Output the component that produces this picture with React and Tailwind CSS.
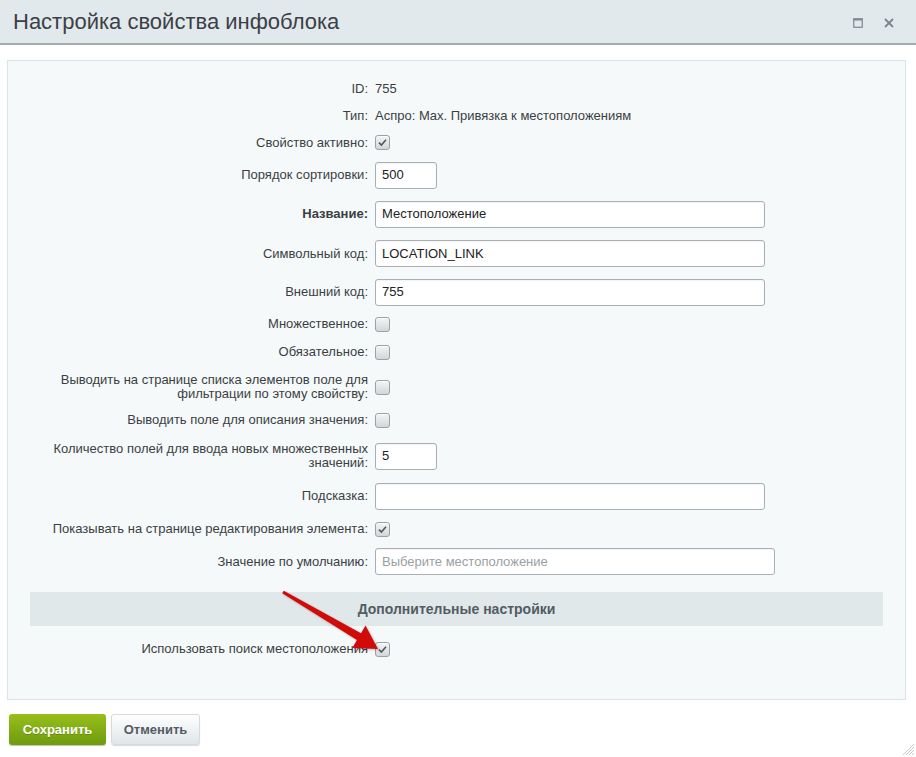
import React from 'react'

const font = { fontFamily: '"Liberation Sans", Arial, sans-serif' }

function Checkbox({ checked }) {
  return (
    <span className="inline-flex h-[15px] w-[15px] items-center justify-center rounded-[3px] border border-[#9aa1a7] bg-gradient-to-b from-[#f3f4f5] to-[#d3d7da] shadow-[inset_0_1px_0_#fff]">
      {checked && (
        <svg width="11" height="11" viewBox="0 0 11 11">
          <path d="M2 5.6 L4.4 8 L9 2.8" fill="none" stroke="#50575d" strokeWidth="1.6" />
        </svg>
      )}
    </span>
  )
}

function TextInput({ value, placeholder, w }) {
  return (
    <div className={`flex h-[27px] ${w} items-center rounded-[3px] border border-[#a8afb5] bg-white pl-[6px] text-[13px] shadow-[inset_0_1px_1px_rgba(0,0,0,0.05)]`}>
      {value ? (
        <span className="text-[#222]">{value}</span>
      ) : (
        <span className="text-[#9a9fa4]">{placeholder}</span>
      )}
    </div>
  )
}

function Row({ h, label, bold, children, colon = true }) {
  return (
    <div className={`grid grid-cols-[364px_1fr] items-center ${h}`}>
      <div className={`pr-[4px] text-right text-[13px] leading-[14px] text-[#3b3f44] ${bold ? 'font-bold' : ''}`}>
        {label}
        {colon && ':'}
      </div>
      <div className="flex items-center pl-[3px] text-[13px] text-[#3b3f44]">{children}</div>
    </div>
  )
}

export default function App() {
  return (
    <div className="relative h-[757px] w-[916px] overflow-hidden bg-white" style={font}>
      {/* Dialog title bar */}
      <div className="flex h-[45px] items-center justify-between border-b-2 border-[#a5acb0] bg-[#e2e9ec] pl-[13px] pr-[22px]">
        <div className="text-[22px] text-[#3b4046]">Настройка свойства инфоблока</div>
        <div className="flex items-center gap-[21px] pt-[2px]">
          <svg width="10" height="10" viewBox="0 0 10 10">
            <rect x="0.75" y="0.75" width="8.5" height="8.5" fill="none" stroke="#7b8591" strokeWidth="1.2" />
            <line x1="0.75" y1="1.8" x2="9.25" y2="1.8" stroke="#7b8591" strokeWidth="1.4" />
          </svg>
          <svg width="10" height="10" viewBox="0 0 10 10">
            <path d="M1 1 L9 9 M9 1 L1 9" stroke="#7b8591" strokeWidth="1.8" />
          </svg>
        </div>
      </div>

      {/* Settings panel */}
      <div className="ml-[7px] mt-[15px] h-[640px] w-[899px] border border-[#d9e4ea] bg-[#f5f9f9] pt-[14px]">
        <Row h="h-[27px]" label="ID">755</Row>
        <Row h="h-[27px]" label="Тип">Аспро: Max. Привязка к местоположениям</Row>
        <Row h="h-[27px]" label="Свойство активно"><Checkbox checked /></Row>
        <Row h="h-[38px]" label="Порядок сортировки"><TextInput value="500" w="w-[62px]" /></Row>
        <Row h="h-[40px]" label="Название" bold><TextInput value="Местоположение" w="w-[390px]" /></Row>
        <Row h="h-[39px]" label="Символьный код"><TextInput value="LOCATION_LINK" w="w-[390px]" /></Row>
        <Row h="h-[38px]" label="Внешний код"><TextInput value="755" w="w-[390px]" /></Row>
        <Row h="h-[26px]" label="Множественное"><Checkbox /></Row>
        <Row h="h-[30px]" label="Обязательное"><Checkbox /></Row>
        <Row h="h-[40px]" label={<>Выводить на странице списка элементов поле для<br />фильтрации по этому свойству</>}><Checkbox /></Row>
        <Row h="h-[26px]" label="Выводить поле для описания значения"><Checkbox /></Row>
        <Row h="h-[46px]" label={<>Количество полей для ввода новых множественных<br />значений</>}><TextInput value="5" w="w-[62px]" /></Row>
        <Row h="h-[34px]" label="Подсказка"><TextInput w="w-[390px]" /></Row>
        <Row h="h-[32px]" label="Показывать на странице редактирования элемента"><Checkbox checked /></Row>
        <Row h="h-[33px]" label="Значение по умолчанию"><TextInput placeholder="Выберите местоположение" w="w-[400px]" /></Row>

        <div className="ml-[22px] mr-[22px] mt-[14px] flex h-[34px] items-center justify-center bg-[#e0e8ea] text-[14px] font-bold text-[#525c63]">
          Дополнительные настройки
        </div>

        <Row h="h-[28px] mt-[9px]" label="Использовать поиск местоположения" colon={false}><Checkbox checked /></Row>
      </div>

      {/* Footer buttons */}
      <div className="flex gap-[5px] pl-[9px] pt-[14px]">
        <button className="flex h-[31px] w-[97px] items-center justify-center rounded-[3px] bg-gradient-to-b from-[#97bf1c] to-[#6f9b0d] text-[13px] font-bold text-white shadow-[0_1px_1px_rgba(0,0,0,0.25)] [text-shadow:0_1px_0_rgba(0,0,0,0.2)]">
          Сохранить
        </button>
        <button className="flex h-[31px] w-[89px] items-center justify-center rounded-[3px] border border-[#d4dadd] bg-gradient-to-b from-[#ffffff] to-[#dfe5e8] text-[13px] font-bold text-[#535c65] shadow-[0_1px_1px_rgba(0,0,0,0.15)]">
          Отменить
        </button>
      </div>

      {/* Resize grip */}
      <svg className="absolute bottom-[2px] right-[2px]" width="12" height="12" viewBox="0 0 12 12">
        <path d="M12 1 L1 12 M12 4 L4 12 M12 7 L7 12 M12 10 L10 12" stroke="#b5babd" strokeWidth="0.8" />
      </svg>

      {/* Pointer arrow */}
      <svg className="pointer-events-none absolute left-0 top-0" width="916" height="757" viewBox="0 0 916 757">
        <polygon
          points="282.2,593.3 356.9,640.1 352.3,648 378,649 365.5,625.5 361,633.2 283.8,590.7"
          fill="#d10a0a"
          style={{ filter: 'drop-shadow(1px 1px 1px rgba(0,0,0,0.25))' }}
        />
      </svg>
    </div>
  )
}
